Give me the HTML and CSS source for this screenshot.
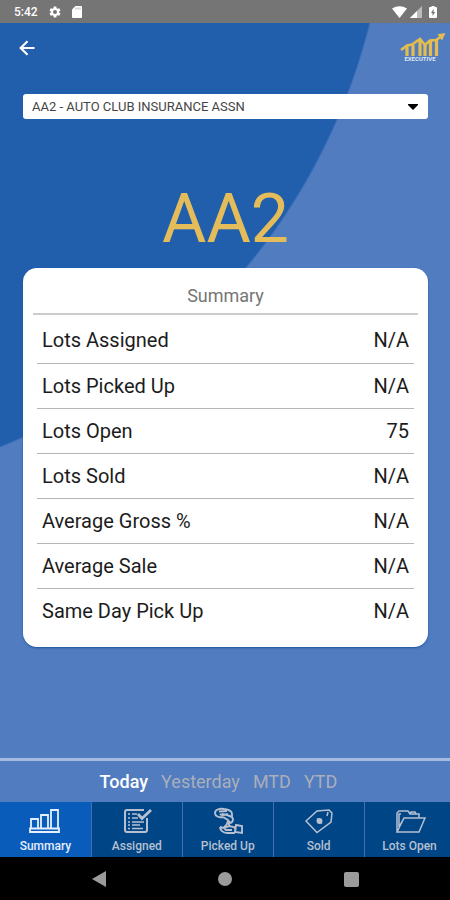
FILE: index.html
```html
<!DOCTYPE html>
<html lang="en">
<head>
<meta charset="utf-8">
<meta name="viewport" content="width=device-width, initial-scale=1">
<title>Executive Summary</title>
<link rel="stylesheet" href="styles.css">
</head>
<body>
<div class="status">
  <span>5:42</span>
  <svg width="12" height="12" viewBox="0 0 24 24" fill="currentColor"><path fill-rule="evenodd" d="M9.5 1h5l.7 3.500 2 1.200 3.300-1.200 2.500 4.300-2.700 2.300v1.800l2.700 2.300-2.500 4.300-3.300-1.200-2 1.200-.7 3.500h-5l-.7-3.500-2-1.200-3.300 1.200L1 15.200l2.700-2.300v-1.800L1 8.800l2.500-4.300 3.300 1.200 2-1.200zM12 8a4 4 0 1 0 0 8 4 4 0 0 0 0-8z"/></svg>
  <svg width="10" height="12" viewBox="0 0 10 12"><path fill="currentColor" d="M3.500 0H9a1 1 0 0 1 1 1v10a1 1 0 0 1-1 1H1a1 1 0 0 1-1-1V3.500z"/><path d="M4 1.500v2M6 1.500v2M8 1.500v2" stroke="#999" stroke-width=".8"/></svg>
  <span class="status-right">
    <svg width="15" height="12" viewBox="0 0 15 12"><path fill="currentColor" d="M0 2.500Q7.500-2 15 2.500L7.500 12z"/></svg>
    <svg width="12" height="12" viewBox="0 0 12 12"><path fill="#bbb" d="M12 0v12H0z"/><path fill="currentColor" d="M7 5v7H0z"/></svg>
    <svg width="8" height="12" viewBox="0 0 8 12"><path fill="currentColor" d="M2.500 0h3v1H7a1 1 0 0 1 1 1v9a1 1 0 0 1-1 1H1a1 1 0 0 1-1-1V2a1 1 0 0 1 1-1h1.500z"/><path fill="#757575" d="M4.600 3v3h1.600L3.500 10V7H2z"/></svg>
  </span>
</div>
<header class="top">
  <button class="back" type="button" aria-label="Back">
    <svg width="16" height="16" viewBox="0 0 16 16" fill="none" stroke="currentColor" stroke-width="2.200"><path d="M15.500 8H2M8.500 1.200L1.700 8l6.800 6.800"/></svg>
  </button>
  <svg class="logo" width="46" height="30" viewBox="0 0 46 30" role="img" aria-label="Executive">
    <g fill="none" stroke="#e4bd4e"><path stroke-width="2.600" d="M1 17l6-4.500 5-1 8-5.500 5 6 5-4.500 6-.500 6-4"/><path stroke-width="3.200" d="M7 13v10M13 12v11M20 7v16M25 12v11M30.500 8v15M36.500 7v16"/></g>
    <path fill="#e4bd4e" d="M37.500 1.200L45.500 0 42 7.500z"/>
    <text x="20" y="28" text-anchor="middle" class="logo-text">EXECUTIVE</text>
  </svg>
</header>
<main class="content">
  <select class="company" aria-label="Company"><option>AA2 - AUTO CLUB INSURANCE ASSN</option></select>
  <h1>AA2</h1>
  <section class="card">
    <h2>Summary</h2>
    <table>
      <tr><th scope="row">Lots Assigned</th><td>N/A</td></tr>
      <tr><th scope="row">Lots Picked Up</th><td>N/A</td></tr>
      <tr><th scope="row">Lots Open</th><td>75</td></tr>
      <tr><th scope="row">Lots Sold</th><td>N/A</td></tr>
      <tr><th scope="row">Average Gross %</th><td>N/A</td></tr>
      <tr><th scope="row">Average Sale</th><td>N/A</td></tr>
      <tr><th scope="row">Same Day Pick Up</th><td>N/A</td></tr>
    </table>
  </section>
</main>
<div class="periods">
  <button type="button" class="active">Today</button>
  <button type="button">Yesterday</button>
  <button type="button">MTD</button>
  <button type="button">YTD</button>
</div>
<nav class="tabs">
  <a href="#summary" class="active">
    <svg viewBox="0 0 32 28"><path stroke-width="1.800" d="M2 21.500V12h7v9.500M12 21.500V8h7v13.500M22 21.500V3h7v18.500M1 21.500h29v3.500H1z"/></svg>
    Summary</a>
  <a href="#assigned">
    <svg viewBox="0 0 32 28"><path stroke-width="2" d="M23 3H6a2 2 0 0 0-2 2v18a2 2 0 0 0 2 2h18a2 2 0 0 0 2-2V11"/><path d="M7 7h2M11 7h5M7 11h2M11 11h6M7 15h2M11 15h12M7 18h2M11 18h8M7 21.500h2M11 21.500h11"/><path stroke-width="2.800" d="M17 7l4 4.500L30 3"/></svg>
    Assigned</a>
  <a href="#picked">
    <svg viewBox="0 0 32 28"><g stroke-width="1.900"><path d="M11 10c-4 1-8-1-8-4s4-5 9-4c4 .500 8 2 8 5v3l1 2c0 3-2 4-4 4v3M11 10l5 3c0 3-1 5-4 7M8 7c2 2 5 1 8 0M7 4.500l8-.500M20 10l-5-2-5-1"/><path d="M8 20l4 1 5-2 5 1 2 3M8 20c0 3 3 6 7 6h8M12 21l2 2h6M24 18l6 1v7l-7-1zM15 16l3-2"/></g></svg>
    Picked Up</a>
  <a href="#sold">
    <svg viewBox="0 0 32 28"><path d="M3 14L14 4l12-1 3 3-1 9-14 10.500zM25 5l-1 4"/><circle cx="16.500" cy="14" r="2.200" fill="currentColor"/><path d="M14 11.500l5 5"/></svg>
    Sold</a>
  <a href="#open">
    <svg viewBox="0 0 32 28"><path d="M3 25V6l2-2h9l2 3h9v4M3 25L10 11h21l-6 14zM5 20V7h2M16 7l1-2h4l1 2M5 20l5-9"/></svg>
    Lots Open</a>
</nav>
<div class="system">
  <button type="button" aria-label="System back"><svg width="16" height="16" viewBox="0 0 16 16"><path d="M15 0v16L1 8z"/></svg></button>
  <button type="button" aria-label="Home"><svg width="16" height="16" viewBox="0 0 16 16"><circle cx="8" cy="8" r="7"/></svg></button>
  <button type="button" aria-label="Recent apps"><svg width="16" height="16" viewBox="0 0 16 16"><rect x="1" y="1" width="15" height="15" rx="2"/></svg></button>
</div>
</body>
</html>
```
FILE: styles.css
```css
* { box-sizing: border-box; }

body {
  margin: 0;
  min-height: 100vh;
  display: flex;
  flex-direction: column;
  font-family: Roboto, "Liberation Sans", sans-serif;
  background: radial-gradient(circle at -229px -126px, #215fad 616px, #517cc0 618px);
}

button {
  border: 0;
  padding: 0;
  background: none;
  font: inherit;
  color: inherit;
}

svg { display: block; }

.status {
  display: flex;
  align-items: center;
  gap: 11px;
  height: 23px;
  padding: 0 13px 0 14px;
  background: #757575;
  color: #fff;
  font-size: 12px;
  font-weight: 500;
}

.status-right {
  display: flex;
  gap: 3px;
  margin-left: auto;
}

.status-right svg:last-child { margin-left: 4px; }

.top {
  display: flex;
  justify-content: space-between;
  align-items: center;
  height: 50px;
  padding: 0 4px 0 19px;
  color: #fff;
}

.logo-text {
  fill: #dfe6f2;
  font-size: 6px;
  font-weight: 700;
}

.content {
  flex: 1;
  display: flex;
  flex-direction: column;
  padding: 21px 22px 24px 23px;
}

.company {
  appearance: none;
  height: 25px;
  padding: 0 9px;
  border: 0;
  border-radius: 3px;
  color: #444;
  font: 13px Roboto, "Liberation Sans", sans-serif;
  background: #fff url("data:image/svg+xml,%3Csvg xmlns='http://www.w3.org/2000/svg' width='10' height='6'%3E%3Cpath d='M0 0h10v1L5 6 0 1z'/%3E%3C/svg%3E") no-repeat right 10px center;
}

h1 {
  margin: 60px 0 9px;
  text-align: center;
  color: #e4bd5a;
  font-size: 68px;
  font-weight: 400;
  line-height: 80px;
}

.card {
  padding: 16px 10px 14px;
  border-radius: 14px;
  background: #fff;
  box-shadow: 0 1px 2px #1d549c;
}

h2 {
  margin: 0;
  padding-bottom: 5px;
  border-bottom: 2px solid #ccc;
  text-align: center;
  color: #757575;
  font-size: 18px;
  font-weight: 400;
  line-height: 24px;
}

table {
  width: calc(100% - 8px);
  margin: 3px 4px 0;
  border-collapse: collapse;
  color: #1c1c1c;
  font-size: 20px;
}

th, td {
  height: 45px;
  padding: 0 5px;
  text-align: left;
  font-weight: 400;
}

td { text-align: right; }

tr + tr { border-top: 1px solid #b5b5b5; }

.periods {
  display: flex;
  justify-content: center;
  gap: 13px;
  height: 44px;
  padding-right: 13px;
  border-top: 3px solid #a5bbe0;
  color: #a9afba;
  font-size: 18px;
}

.periods .active {
  color: #fff;
  font-weight: 500;
}

.tabs {
  display: grid;
  grid-template-columns: repeat(5, 20.2%);
  height: 55px;
  overflow: hidden;
  background: #004586;
}

.tabs a {
  display: flex;
  flex-direction: column;
  align-items: center;
  padding-top: 5px;
  color: #b6c0d0;
  font-size: 12px;
  line-height: 16px;
  font-weight: 500;
  text-decoration: none;
}

.tabs a + a { border-left: 1px solid #426fb0; }

.tabs .active {
  color: #e5efff;
  background: #095cba;
}

.tabs svg {
  width: 32px;
  height: 28px;
  margin-bottom: 3px;
  fill: none;
  stroke: currentColor;
  stroke-width: 1.5;
}

.system {
  display: flex;
  justify-content: center;
  gap: 110px;
  height: 43px;
  background: #000;
}

.system svg { fill: #9b9b9b; }
```
